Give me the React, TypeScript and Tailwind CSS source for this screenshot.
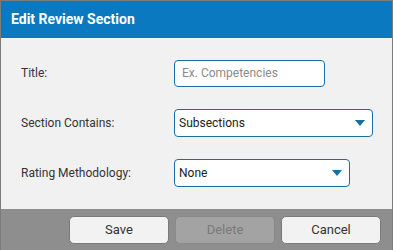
import React from "react";

function Caret() {
  return (
    <svg width="10" height="6" viewBox="0 0 10 6" className="shrink-0">
      <path d="M0 0 L10 0 L5 6 Z" fill="#1a6ea6" />
    </svg>
  );
}

export default function App() {
  return (
    <div className="w-[393px] h-[250px] border border-[#7c7c7c] border-b-0 flex flex-col font-['Roboto',sans-serif] overflow-hidden">
      <div className="h-[37px] shrink-0 bg-[#0a79c0] pl-[10px] flex items-center text-white font-bold text-[14px]">
        Edit Review Section
      </div>
      <div className="h-[171px] shrink-0 bg-[#f1f1f1] pl-[20px] pt-[21px] flex flex-col gap-[22px] text-[12px] text-[#333333]">
        <div className="flex items-center h-[28px]">
          <div className="w-[153px]">Title:</div>
          <div className="w-[151px] h-[27px] border border-[#1a6ea6] rounded-[4px] bg-white flex items-center pl-[7px] text-[#8a8a8a]">
            Ex. Competencies
          </div>
        </div>
        <div className="flex items-center h-[28px]">
          <div className="w-[153px]">Section Contains:</div>
          <div className="w-[199px] h-[28px] border border-[#1a6ea6] rounded-[4px] bg-white flex items-center justify-between pl-[4px] pr-[7px] text-[#222222]">
            <span>Subsections</span>
            <Caret />
          </div>
        </div>
        <div className="flex items-center h-[28px]">
          <div className="w-[153px]">Rating Methodology:</div>
          <div className="w-[176px] h-[28px] border border-[#1a6ea6] rounded-[4px] bg-white flex items-center justify-between pl-[4px] pr-[7px] text-[#222222]">
            <span>None</span>
            <Caret />
          </div>
        </div>
      </div>
      <div className="flex-1 bg-[#8e8e8e] flex justify-end items-start pt-[7px] pr-[11px] gap-[6px] text-[13px]">
        <div className="w-[100px] h-[28px] rounded-[5px] bg-[#f2f2f2] border border-[#7a7a7a] flex items-center justify-center text-[#333333]">
          Save
        </div>
        <div className="w-[100px] h-[28px] rounded-[5px] bg-[#a3a3a3] border border-[#8a8a8a] flex items-center justify-center text-[#7a7a7a]">
          Delete
        </div>
        <div className="w-[100px] h-[28px] rounded-[5px] bg-[#f2f2f2] border border-[#7a7a7a] flex items-center justify-center text-[#333333]">
          Cancel
        </div>
      </div>
    </div>
  );
}
